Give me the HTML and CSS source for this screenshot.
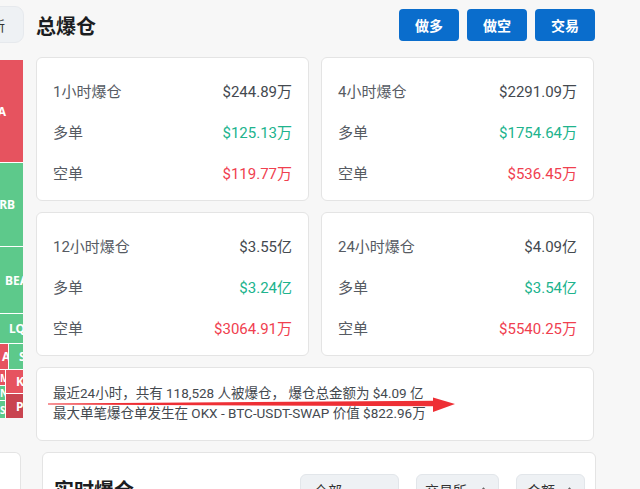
FILE: index.html
```html
<!DOCTYPE html>
<html lang="zh">
<head>
<meta charset="utf-8">
<title>总爆仓</title>
<link rel="stylesheet" href="styles.css">
</head>
<body>
<div class="page">
  <div class="top">
    <aside class="side">
      <div class="side-btn"><span>最新</span></div>
      <div class="treemap">
        <div class="cell red c1"><span>A</span></div>
        <div class="cell green c2"><span>RB</span></div>
        <div class="cell green c3"><span>BEAM</span></div>
        <div class="cell green c4"><span>LQTY</span></div>
        <div class="trow r5">
          <div class="cell red r5a"><span>A</span></div>
          <div class="cell green r5b"><span>SUI</span></div>
        </div>
        <div class="trow r6">
          <div class="tcol r6l">
            <div class="cell red m"><span>M</span></div>
            <div class="cell green n"><span>N</span></div>
            <div class="cell green s"><span>S</span></div>
          </div>
          <div class="tcol r6r">
            <div class="cell red k"><span>K</span></div>
            <div class="cell darkred p"><span>P</span></div>
          </div>
        </div>
      </div>
    </aside>
    <main class="main">
      <header class="head">
        <h1 class="title">总爆仓</h1>
        <div class="actions">
          <button class="btn">做多</button>
          <button class="btn">做空</button>
          <button class="btn">交易</button>
        </div>
      </header>
      <div class="grid">
        <div class="card stat">
          <div class="row"><span class="lbl">1小时爆仓</span><span class="val">$244.89万</span></div>
          <div class="row"><span class="lbl">多单</span><span class="val up">$125.13万</span></div>
          <div class="row"><span class="lbl">空单</span><span class="val down">$119.77万</span></div>
        </div>
        <div class="card stat">
          <div class="row"><span class="lbl">4小时爆仓</span><span class="val">$2291.09万</span></div>
          <div class="row"><span class="lbl">多单</span><span class="val up">$1754.64万</span></div>
          <div class="row"><span class="lbl">空单</span><span class="val down">$536.45万</span></div>
        </div>
        <div class="card stat">
          <div class="row"><span class="lbl">12小时爆仓</span><span class="val">$3.55亿</span></div>
          <div class="row"><span class="lbl">多单</span><span class="val up">$3.24亿</span></div>
          <div class="row"><span class="lbl">空单</span><span class="val down">$3064.91万</span></div>
        </div>
        <div class="card stat">
          <div class="row"><span class="lbl">24小时爆仓</span><span class="val">$4.09亿</span></div>
          <div class="row"><span class="lbl">多单</span><span class="val up">$3.54亿</span></div>
          <div class="row"><span class="lbl">空单</span><span class="val down">$5540.25万</span></div>
        </div>
        <div class="card summary">
          <p>最近24小时，共有 118,528 人被爆仓， 爆仓总金额为 $4.09 亿</p>
          <p>最大单笔爆仓单发生在 OKX - BTC-USDT-SWAP 价值 $822.96万</p>
        </div>
      </div>
    </main>
  </div>
  <div class="bottom">
    <div class="mini-card"></div>
    <section class="card live">
      <h2 class="title live-title">实时爆仓</h2>
      <div class="filters">
        <div class="select wide">全部</div>
        <div class="select exch">交易所 <svg class="chev" viewBox="0 0 10 6"><path d="M1 5 L5 1 L9 5" fill="none" stroke="#666" stroke-width="1.3"/></svg></div>
        <div class="select amt">金额 <svg class="chev" viewBox="0 0 10 6"><path d="M1 5 L5 1 L9 5" fill="none" stroke="#666" stroke-width="1.3"/></svg></div>
      </div>
    </section>
  </div>
  <svg class="arrow" viewBox="0 0 640 489" width="640" height="489">
    <polygon points="48,403.6 436,400.8 436,406.2 48,404.6" fill="#ee2f35"/>
    <polygon points="433,397.5 455,404 433,412" fill="#ee2f35"/>
  </svg>
</div>
</body>
</html>
```

FILE: styles.css
```css
* { box-sizing: border-box; }
html, body { margin: 0; padding: 0; }
body {
  background: #f7f7f7;
  font-family: Roboto, "Noto Sans CJK SC", sans-serif;
  color: #3f444b;
  width: 640px;
  height: 489px;
  overflow: hidden;
}
.page {
  position: relative;
  padding-top: 9px;
  width: 640px;
  height: 489px;
  overflow: hidden;
}
.top {
  display: flex;
  gap: 12px;
  align-items: flex-start;
}
.side {
  width: 24px;
  flex: none;
  margin-top: -3px;
  overflow: hidden;
}
.side-btn {
  width: 62px;
  height: 37px;
  margin-left: -38px;
  margin-bottom: 17px;
  background: #eef1f4;
  border: 1px solid #e6e9ed;
  border-radius: 9px;
  display: flex;
  align-items: center;
  justify-content: flex-end;
  padding-right: 18px;
  font-size: 14px;
  color: #333;
  white-space: nowrap;
}
.treemap {
  width: 23px;
  display: flex;
  flex-direction: column;
  gap: 1px;
  background: #fff;
}
.cell {
  display: flex;
  align-items: center;
  overflow: hidden;
  color: #fff;
  font-weight: 700;
  font-size: 12px;
  white-space: nowrap;
  font-family: "Noto Sans", sans-serif;
}
.red { background: #e6535f; }
.green { background: #5dc98b; }
.darkred { background: #c94450; }
.c1 { height: 102px; justify-content: flex-end; padding-right: 17px; }
.c2 { height: 83px; justify-content: flex-end; padding-right: 8px; }
.c3 { height: 66px; padding-left: 5px; }
.c4 { height: 29px; padding-left: 9px; }
.trow { display: flex; gap: 1px; }
.tcol { display: flex; flex-direction: column; gap: 1px; }
.r5 { height: 25px; }
.r5a { width: 8px; padding-left: 2px; }
.r5b { width: 14px; padding-left: 10px; }
.r6 { height: 48px; }
.r6l { width: 5px; }
.r6r { width: 17px; }
.m { height: 15px; font-size: 10px; padding-left: 0; }
.n { height: 14px; font-size: 10px; }
.s { height: 17px; font-size: 10px; }
.k { height: 23px; padding-left: 10px; }
.p { height: 24px; padding-left: 10px; }

.main { width: 559px; flex: none; }
.head {
  height: 32px;
  display: flex;
  align-items: center;
  justify-content: space-between;
  margin-bottom: 16px;
}
.title {
  margin: 0;
  font-size: 20px;
  font-weight: 700;
  color: #1b1d21;
  font-family: "Noto Sans CJK SC", sans-serif;
}
.actions { display: flex; gap: 8px; }
.btn {
  width: 60px;
  height: 32px;
  border: none;
  border-radius: 4px;
  background: #0a6dcc;
  color: #fff;
  font-weight: 700;
  font-size: 14px;
  font-family: "Noto Sans CJK SC", sans-serif;
  padding: 0;
}
.grid {
  display: grid;
  grid-template-columns: 273px 273px;
  column-gap: 12px;
  row-gap: 11px;
}
.card {
  background: #fff;
  border: 1px solid #e4e4e4;
  border-radius: 6px;
}
.stat {
  height: 144px;
  padding: 12px 16px 0 16px;
}
.row {
  height: 41px;
  display: flex;
  align-items: center;
  justify-content: space-between;
  font-size: 15px;
}
.lbl { color: #565b63; }
.val { color: #44494f; }
.up { color: #20b38d; }
.down { color: #f0404f; }
.summary {
  grid-column: span 2;
  height: 74px;
  padding: 15px 16px;
}
.summary p {
  margin: 0;
  font-size: 13.5px;
  line-height: 20px;
  color: #44494f;
  white-space: nowrap;
}
.bottom {
  display: flex;
  gap: 21px;
  margin-top: 11px;
}
.mini-card {
  width: 21px;
  height: 60px;
  background: #fff;
  border: 1px solid #e4e4e4;
  border-left: none;
  border-radius: 0 6px 6px 0;
  flex: none;
}
.live {
  width: 554px;
  height: 80px;
  padding: 21px 10px 0 11px;
  display: flex;
  align-items: flex-start;
  justify-content: space-between;
}
.live-title { line-height: 32px; }
.filters { display: flex; gap: 17px; }
.select {
  height: 32px;
  background: #eef1f4;
  border: 1px solid #e2e6ea;
  border-radius: 6px;
  display: flex;
  align-items: center;
  justify-content: space-between;
  padding: 0 10px 0 8px;
  font-size: 14px;
  color: #333;
  font-family: "Noto Sans CJK SC", sans-serif;
}
.select.wide { width: 99px; padding-left: 13px; }
.select.exch { width: 83px; }
.select.amt { width: 69px; padding-left: 10px; }
.chev { width: 9px; height: 6px; }
.arrow {
  position: absolute;
  left: 0;
  top: 0;
  pointer-events: none;
}
```
